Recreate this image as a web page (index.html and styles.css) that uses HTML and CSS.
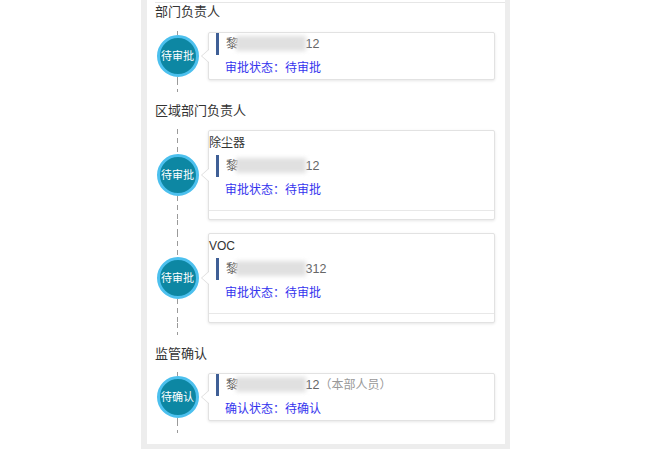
FILE: index.html
```html
<!DOCTYPE html>
<html lang="zh">
<head>
<meta charset="utf-8">
<title>审批流程</title>
<link rel="stylesheet" href="styles.css">
</head>
<body>
<div class="frame">
  <div class="panel">
    <div class="top-rule"></div>

    <div class="section-title first">部门负责人</div>
    <div class="item">
      <div class="axis">
        <div class="seg"></div>
        <div class="dot">待审批</div>
        <div class="seg"></div>
        <div class="seg tail"></div>
      </div>
      <div class="body">
        <div class="card">
          <div class="name">黎<span class="mask"></span>12</div>
          <div class="status">审批状态：待审批</div>
        </div>
      </div>
    </div>

    <div class="section-title">区域部门负责人</div>
    <div class="item">
      <div class="axis">
        <div class="seg"></div>
        <div class="dot">待审批</div>
        <div class="seg"></div>
        <div class="seg tail"></div>
      </div>
      <div class="body">
        <div class="card">
          <div class="label">除尘器</div>
          <div class="name">黎<span class="mask"></span>12</div>
          <div class="status">审批状态：待审批</div>
          <div class="footer"></div>
        </div>
      </div>
    </div>
    <div class="item">
      <div class="axis">
        <div class="seg"></div>
        <div class="dot">待审批</div>
        <div class="seg"></div>
        <div class="seg tail"></div>
      </div>
      <div class="body">
        <div class="card">
          <div class="label">VOC</div>
          <div class="name">黎<span class="mask"></span>312</div>
          <div class="status">审批状态：待审批</div>
          <div class="footer"></div>
        </div>
      </div>
    </div>

    <div class="section-title">监管确认</div>
    <div class="item">
      <div class="axis">
        <div class="seg"></div>
        <div class="dot">待确认</div>
        <div class="seg"></div>
        <div class="seg tail"></div>
      </div>
      <div class="body">
        <div class="card">
          <div class="name">黎<span class="mask"></span>12<span class="note">（本部人员）</span></div>
          <div class="status">确认状态：待确认</div>
        </div>
      </div>
    </div>
  </div>
</div>
</body>
</html>
```

FILE: styles.css
```css
html, body {
  margin: 0;
  padding: 0;
  background: #ffffff;
}

body {
  font-family: "Liberation Sans", "Noto Sans CJK SC", sans-serif;
  color: #333333;
}

.frame {
  margin-left: 141px;
  width: 358px;
  padding: 0 5px 5px 6px;
  background: #ededed;
}

.panel {
  background: #ffffff;
  padding-bottom: 11px;
}

.top-rule {
  height: 2px;
  margin-left: 8px;
  border-bottom: 1px solid #e6e6e6;
}

.section-title {
  padding: 9px 0 8px 8px;
  font-size: 13px;
  line-height: 20px;
  color: #333333;
}

.section-title.first {
  padding-top: 0;
  line-height: 18px;
  padding-bottom: 10px;
}

.item {
  display: flex;
  align-items: stretch;
}

.axis {
  width: 61px;
  flex: none;
  display: flex;
  flex-direction: column;
  align-items: center;
}

.seg {
  flex: 1;
  width: 1px;
  background: repeating-linear-gradient(to bottom, #9a9a9a 0 5px, transparent 5px 9px);
}

.seg.tail {
  flex: none;
  height: 12px;
}

.dot {
  flex: none;
  width: 36px;
  height: 36px;
  border: 3px solid #4cc0ee;
  border-radius: 50%;
  background: #0d87a3;
  color: #ffffff;
  font-size: 11px;
  line-height: 36px;
  text-align: center;
  white-space: nowrap;
}

.body {
  flex: 1;
  padding: 1px 10px 12px 0;
}

.card {
  position: relative;
  border: 1px solid #e2e2e2;
  border-radius: 2px;
  background: #ffffff;
  box-shadow: 0 1px 3px rgba(0, 0, 0, 0.10);
  padding-bottom: 1px;
}

.card::before {
  content: "";
  position: absolute;
  left: -8px;
  top: 50%;
  margin-top: -7px;
  border-style: solid;
  border-width: 7px 8px 7px 0;
  border-color: transparent #dcdcdc transparent transparent;
}

.card::after {
  content: "";
  position: absolute;
  left: -7px;
  top: 50%;
  margin-top: -7px;
  border-style: solid;
  border-width: 7px 8px 7px 0;
  border-color: transparent #ffffff transparent transparent;
}

.label {
  height: 24px;
  line-height: 24px;
  font-size: 12px;
  color: #333333;
}

.name {
  margin-left: 7px;
  height: 22px;
  line-height: 22px;
  border-left: 3px solid #3f5f96;
  padding-left: 7px;
  font-size: 12.5px;
  color: #666666;
  white-space: nowrap;
}

.mask {
  display: inline-block;
  width: 70px;
  height: 15px;
  vertical-align: -3px;
  margin-left: -3px;
  background: #e0e0e0;
  filter: blur(2px);
}

.note {
  color: #999999;
  font-size: 12px;
}

.status {
  margin-top: 3px;
  padding-left: 16px;
  line-height: 20px;
  font-size: 12px;
  color: #3434ee;
}

.footer {
  margin-top: 10px;
  height: 7px;
  border-top: 1px solid #e8e8e8;
}
```
